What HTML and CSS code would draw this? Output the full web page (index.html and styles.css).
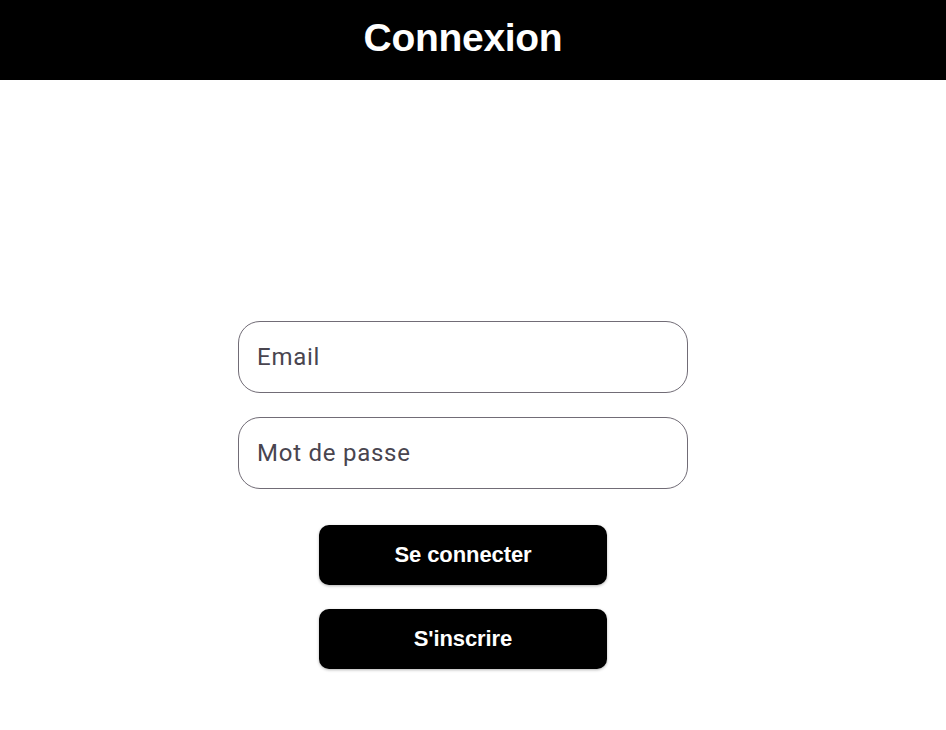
FILE: index.html
```html
<!DOCTYPE html>
<html lang="fr">
<head>
<meta charset="utf-8">
<title>Connexion</title>
<link rel="stylesheet" href="styles.css">
</head>
<body>
<header class="app-bar"><h1 class="title">Connexion</h1></header>
<main class="content">
  <form class="login-form">
    <label class="field"><input class="field-input" type="email" placeholder="Email"></label>
    <label class="field"><input class="field-input" type="password" placeholder="Mot de passe"></label>
    <div class="actions">
      <button class="btn" type="button">Se connecter</button>
      <button class="btn" type="button">S'inscrire</button>
    </div>
  </form>
</main>
</body>
</html>
```

FILE: styles.css
```css
* { box-sizing: border-box; }
html, body { margin: 0; padding: 0; background: #fff; }
body { font-family: Roboto, "Liberation Sans", sans-serif; width: 946px; height: 730px; overflow: hidden; }
.app-bar {
  height: 80px;
  background: #000;
  display: flex;
  align-items: center;
  justify-content: center;
  padding-right: 20px;
}
.title {
  margin: 0;
  color: #fff;
  font-family: "Liberation Sans", Arial, sans-serif;
  font-size: 39px;
  font-weight: 700;
  letter-spacing: -0.3px;
  line-height: 1;
  padding-bottom: 5px;
}
.content {
  display: flex;
  justify-content: center;
  padding-top: 241px;
  padding-right: 20px;
}
.login-form {
  width: 450px;
  display: flex;
  flex-direction: column;
  gap: 24px;
}
.field { display: block; }
.field-input {
  width: 100%;
  height: 72px;
  border: 1.6px solid #716c76;
  border-radius: 22px;
  padding: 0 18px;
  font-family: Roboto, "Liberation Sans", sans-serif;
  font-size: 24px;
  letter-spacing: 0.75px;
  color: #1d1b20;
  background: #fff;
  outline: none;
}
.field-input::placeholder { color: #49454f; opacity: 1; }
.actions {
  display: flex;
  flex-direction: column;
  align-items: center;
  gap: 24px;
  margin-top: 12px;
}
.btn {
  width: 288px;
  height: 60px;
  background: #000;
  color: #fff;
  border: none;
  border-radius: 10px;
  font-family: "Liberation Sans", Arial, sans-serif;
  font-size: 22px;
  font-weight: 700;
  letter-spacing: -0.1px;
  box-shadow: 0 1px 3px rgba(0,0,0,0.3);
  cursor: pointer;
}
```
